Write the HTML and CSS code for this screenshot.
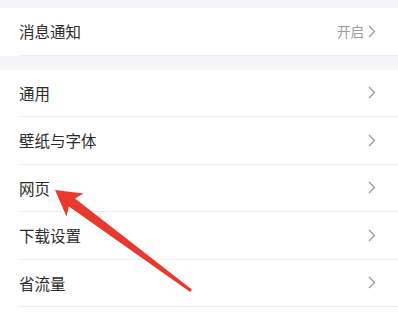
FILE: index.html
```html
<!DOCTYPE html>
<html lang="zh-CN">
<head>
    <meta charset="UTF-8">
    <meta name="viewport" content="width=device-width, initial-scale=1.0">
    <title>设置</title>
    <link rel="stylesheet" href="styles.css">
</head>
<body>
    <div class="page">
        <div class="group group-top">
            <div class="row">
                <span class="label">消息通知</span>
                <span class="right"><span class="value">开启</span><svg class="chevron" viewBox="0 0 8 13"><path d="M1 1 L6.5 6.5 L1 12"/></svg></span>
            </div>
        </div>
        <div class="group group-main">
            <div class="row">
                <span class="label">通用</span>
                <span class="right"><svg class="chevron" viewBox="0 0 8 13"><path d="M1 1 L6.5 6.5 L1 12"/></svg></span>
            </div>
            <div class="row">
                <span class="label">壁纸与字体</span>
                <span class="right"><svg class="chevron" viewBox="0 0 8 13"><path d="M1 1 L6.5 6.5 L1 12"/></svg></span>
            </div>
            <div class="row">
                <span class="label">网页</span>
                <span class="right"><svg class="chevron" viewBox="0 0 8 13"><path d="M1 1 L6.5 6.5 L1 12"/></svg></span>
            </div>
            <div class="row">
                <span class="label">下载设置</span>
                <span class="right"><svg class="chevron" viewBox="0 0 8 13"><path d="M1 1 L6.5 6.5 L1 12"/></svg></span>
            </div>
            <div class="row">
                <span class="label">省流量</span>
                <span class="right"><svg class="chevron" viewBox="0 0 8 13"><path d="M1 1 L6.5 6.5 L1 12"/></svg></span>
            </div>
        </div>

        <!-- red pointer arrow drawn over the list -->
        <svg class="pointer" viewBox="0 0 398 314">
            <polygon points="55,190 83.5,193.5 75,198.5 190.9,288.8 189.1,291.2 68.9,206.5 66.5,216.5"/>
            <circle cx="190" cy="290" r="1.6"/>
        </svg>
    </div>
</body>
</html>
```

FILE: styles.css
```css
body {
    margin: 0;
    background-color: #f4f5f9;
    font-family: "Noto Sans CJK SC", "Noto Sans", sans-serif;
}
.page {
    position: relative;
    height: 314px;
    overflow: hidden;
    display: flex;
    flex-direction: column;
}
.group {
    background-color: white;
    margin-top: 14px;
}
.group-top {
    margin-top: 8px;
}
.group-main {
    flex: 1;
}
.row {
    height: 46.5px;
    margin-left: 19px;
    padding-right: 22px;
    border-bottom: 1px solid #ececec;
    display: flex;
    align-items: center;
    justify-content: space-between;
}
.label {
    font-size: 15.5px;
    color: #2b2b2b;
}
.right {
    display: flex;
    align-items: center;
}
.value {
    font-size: 13.5px;
    color: #999;
    margin-right: 4px;
}
.chevron {
    width: 8px;
    height: 13px;
    fill: none;
    stroke: #9a9a9a;
    stroke-width: 1.3;
}
.pointer {
    position: absolute;
    top: 0;
    left: 0;
    width: 398px;
    height: 314px;
    fill: #e8392e;
}
```
